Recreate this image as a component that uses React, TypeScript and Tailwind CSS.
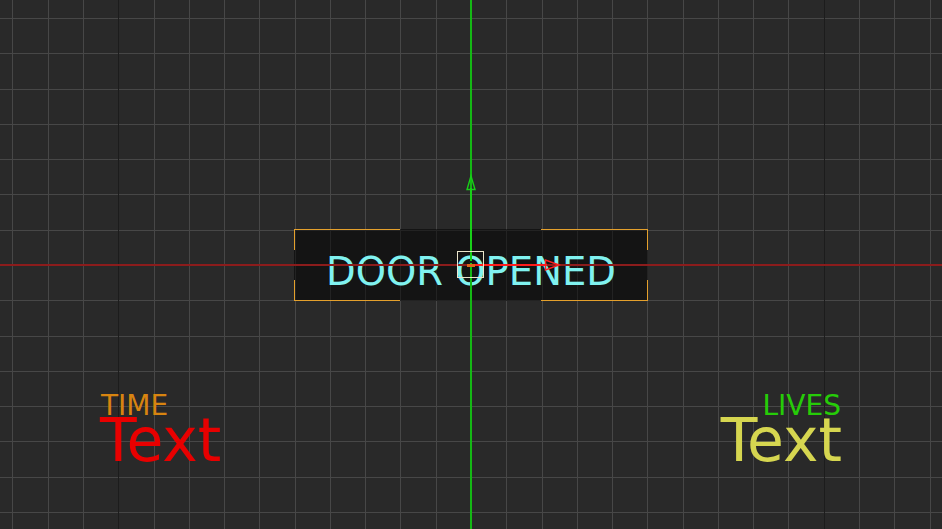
const W = 942;
const H = 529;
const OX = 471;
const OY = 265;
const STEP = 35.27;

const cols = Array.from({ length: 29 }, (_, i) => i - 14).filter((k) => k !== 0);
const rows = Array.from({ length: 17 }, (_, i) => i - 8).filter((k) => k !== 0);

function Grid() {
  return (
    <svg className="absolute inset-0" width={W} height={H} shapeRendering="crispEdges">
      {rows.map((k) => {
        const y = Math.round(OY + k * STEP);
        return <rect key={"r" + k} x={0} y={y} width={W} height={1} fill="#474747" />;
      })}
      {cols.map((k) => {
        const x = Math.round(OX + k * STEP);
        const major = Math.abs(k) === 10;
        return <rect key={"c" + k} x={x} y={0} width={1} height={H} fill={major ? "#1c1c1c" : "#474747"} />;
      })}
    </svg>
  );
}

function Gizmo() {
  const o = "#e4a02c";
  return (
    <svg className="absolute inset-0" width={W} height={H}>
      {/* label rect corners */}
      <g fill={o} shapeRendering="crispEdges">
        <rect x={294} y={229} width={106} height={1} />
        <rect x={294} y={229} width={1} height={21} />
        <rect x={294} y={300} width={106} height={1} />
        <rect x={294} y={280} width={1} height={21} />
        <rect x={541} y={229} width={107} height={1} />
        <rect x={647} y={229} width={1} height={21} />
        <rect x={541} y={300} width={107} height={1} />
        <rect x={647} y={280} width={1} height={21} />
      </g>
      {/* axes */}
      <rect x={0} y={264} width={W} height={2} fill="#8c1c1c" />
      <rect x={470} y={0} width={2} height={H} fill="#14b814" />
      {/* move gizmo */}
      <rect x={471} y={264} width={76} height={2} fill="#ff1c1c" />
      <polygon points="559,265 545.5,260 545.5,270" fill="none" stroke="#ff2020" strokeWidth={1.4} />
      <rect x={470} y={188} width={2} height={77} fill="#18d018" />
      <polygon points="471,176 467,189.5 475,189.5" fill="none" stroke="#18d018" strokeWidth={1.4} />
      <rect x={457.5} y={251.5} width={26} height={26} fill="none" stroke="#ebe5cc" strokeWidth={1} />
      <rect x={469} y={261} width={3} height={2} fill="#1a1a1a" />
      <rect x={467} y={264} width={8} height={3} fill="#e0641a" />
    </svg>
  );
}

export default function App() {
  return (
    <div
      className="relative h-[529px] w-[942px] overflow-hidden bg-[#292929]"
      style={{ fontFamily: '"DejaVu Sans", Verdana, sans-serif' }}
    >
      <Grid />

      {/* DOOR OPENED label */}
      <div className="absolute left-[294px] top-[229px] flex h-[72px] w-[354px] justify-center bg-black/50 pt-[24px]">
        <span className="text-[38.5px] leading-none text-[#80f2f0]">DOOR OPENED</span>
      </div>

      {/* TIME */}
      <span className="absolute left-[101px] top-[392px] text-[28px] leading-none text-[#d88410]">TIME</span>
      <span className="absolute left-[100px] top-[410px] text-[60px] leading-none text-[#e80000]">Text</span>

      {/* LIVES */}
      <span className="absolute right-[101px] top-[392px] text-[28px] leading-none text-[#26cc08]">LIVES</span>
      <span className="absolute right-[100px] top-[410px] text-[60px] leading-none text-[#d6d650]">Text</span>

      <Gizmo />
    </div>
  );
}
